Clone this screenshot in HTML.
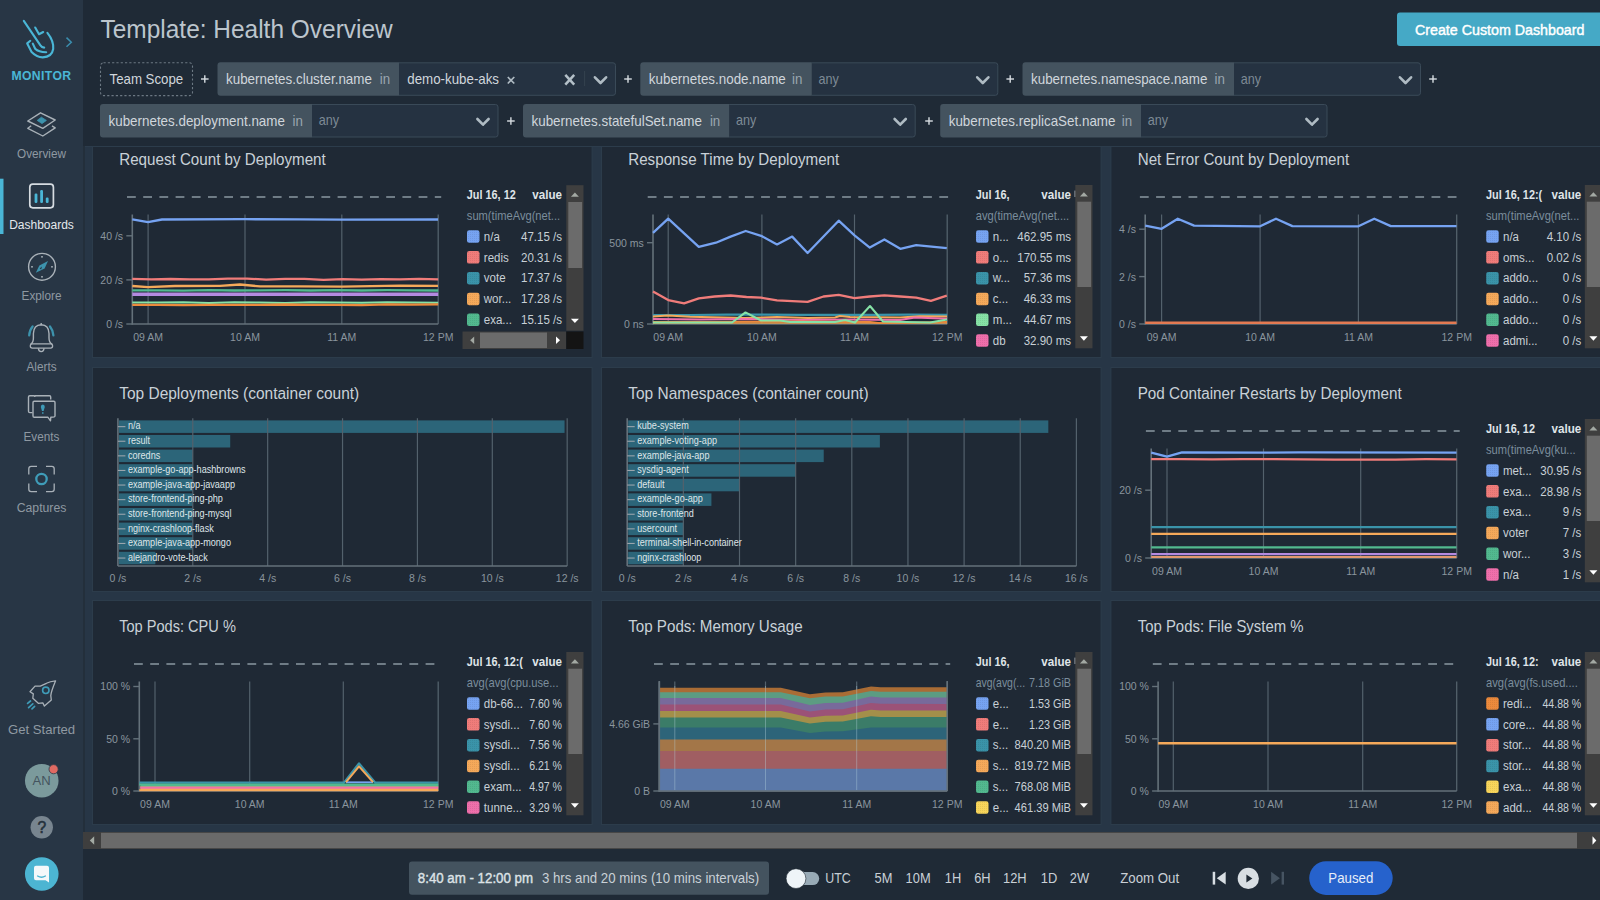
<!DOCTYPE html>
<html><head><meta charset="utf-8"><title>Health Overview</title>
<style>
html,body{margin:0;padding:0;width:1600px;height:900px;overflow:hidden;background:#1f2a36;}
svg{display:block;font-family:"Liberation Sans", sans-serif;}
</style></head><body>
<svg width="1600" height="900" viewBox="0 0 1600 900">
<defs>
<pattern id="dots" width="2" height="2" patternUnits="userSpaceOnUse"><rect width="1" height="1" fill="rgba(0,0,0,0.07)"/></pattern>
</defs>
<rect x="0" y="0" width="1600" height="900" fill="#1f2a36"/>
<rect x="83" y="146" width="1517" height="703" fill="#273646"/>
<line x1="83" y1="146.5" x2="1600" y2="146.5" stroke="#2c3c4c" stroke-width="1"/>
<rect x="92.5" y="146.5" width="499.5" height="211" fill="none" stroke="#2c3c4b" stroke-width="1"/>
<rect x="93" y="147" width="498.5" height="210" fill="#1f2935"/>
<rect x="92.5" y="367.5" width="499.5" height="224" fill="none" stroke="#2c3c4b" stroke-width="1"/>
<rect x="93" y="368" width="498.5" height="223" fill="#1f2935"/>
<rect x="92.5" y="600.5" width="499.5" height="224" fill="none" stroke="#2c3c4b" stroke-width="1"/>
<rect x="93" y="601" width="498.5" height="223" fill="#1f2935"/>
<rect x="601.5" y="146.5" width="499.5" height="211" fill="none" stroke="#2c3c4b" stroke-width="1"/>
<rect x="602" y="147" width="498.5" height="210" fill="#1f2935"/>
<rect x="601.5" y="367.5" width="499.5" height="224" fill="none" stroke="#2c3c4b" stroke-width="1"/>
<rect x="602" y="368" width="498.5" height="223" fill="#1f2935"/>
<rect x="601.5" y="600.5" width="499.5" height="224" fill="none" stroke="#2c3c4b" stroke-width="1"/>
<rect x="602" y="601" width="498.5" height="223" fill="#1f2935"/>
<rect x="1111.0" y="146.5" width="489.5" height="211" fill="none" stroke="#2c3c4b" stroke-width="1"/>
<rect x="1111.5" y="147" width="488.5" height="210" fill="#1f2935"/>
<rect x="1111.0" y="367.5" width="489.5" height="224" fill="none" stroke="#2c3c4b" stroke-width="1"/>
<rect x="1111.5" y="368" width="488.5" height="223" fill="#1f2935"/>
<rect x="1111.0" y="600.5" width="489.5" height="224" fill="none" stroke="#2c3c4b" stroke-width="1"/>
<rect x="1111.5" y="601" width="488.5" height="223" fill="#1f2935"/>
<text transform="translate(119.20 164.80) scale(0.949 1)" font-size="16" fill="#c9d1d8" text-anchor="start">Request Count by Deployment</text>
<line x1="148.1" y1="214.5" x2="148.1" y2="324" stroke="#53616c" stroke-width="1.2"/>
<line x1="245" y1="214.5" x2="245" y2="324" stroke="#53616c" stroke-width="1.2"/>
<line x1="341.8" y1="214.5" x2="341.8" y2="324" stroke="#53616c" stroke-width="1.2"/>
<line x1="132.3" y1="214.5" x2="132.3" y2="324.8" stroke="#64717a" stroke-width="1.6"/>
<line x1="438.2" y1="214.5" x2="438.2" y2="324" stroke="#53616c" stroke-width="1.3"/>
<line x1="132.3" y1="324" x2="438.2" y2="324" stroke="#64717a" stroke-width="1.6"/>
<line x1="126.30000000000001" y1="235.8" x2="132.3" y2="235.8" stroke="#64717a" stroke-width="1.4"/>
<text transform="translate(123.10 239.70) scale(0.955 1)" font-size="11" fill="#8a959e" text-anchor="end">40 /s</text>
<line x1="126.30000000000001" y1="279.9" x2="132.3" y2="279.9" stroke="#64717a" stroke-width="1.4"/>
<text transform="translate(123.10 283.80) scale(0.955 1)" font-size="11" fill="#8a959e" text-anchor="end">20 /s</text>
<line x1="126.30000000000001" y1="324" x2="132.3" y2="324" stroke="#64717a" stroke-width="1.4"/>
<text transform="translate(123.10 327.90) scale(0.955 1)" font-size="11" fill="#8a959e" text-anchor="end">0 /s</text>
<text transform="translate(148.10 340.80) scale(0.955 1)" font-size="11" fill="#8a959e" text-anchor="middle">09 AM</text>
<text transform="translate(245.00 340.80) scale(0.955 1)" font-size="11" fill="#8a959e" text-anchor="middle">10 AM</text>
<text transform="translate(341.80 340.80) scale(0.955 1)" font-size="11" fill="#8a959e" text-anchor="middle">11 AM</text>
<text transform="translate(438.20 340.80) scale(0.955 1)" font-size="11" fill="#8a959e" text-anchor="middle">12 PM</text>
<line x1="127.00000000000001" y1="197.0" x2="441.2" y2="197.0" stroke="#6f7c86" stroke-width="2" stroke-dasharray="8.8 7.4"/>
<polyline points="132.3,219.3 148.0,222.2 162.0,219.5 245.0,219.2 300.0,219.4 342.0,219.6 438.0,219.5" fill="none" stroke="#76a3f2" stroke-width="2.3" stroke-linejoin="round"/>
<polyline points="132.3,278.9 151.4,279.3 170.5,279.0 189.7,279.3 208.8,279.4 227.9,278.7 247.0,278.6 266.1,279.6 285.2,278.9 304.4,278.9 323.5,279.8 342.6,279.2 361.7,279.6 380.8,279.2 400.0,279.4 419.1,278.8 438.2,279.4" fill="none" stroke="#f07c7a" stroke-width="2.3" stroke-linejoin="round"/>
<polyline points="132.3,286.0 148.0,287.2 175.0,286.0 220.0,285.8 240.0,284.5 260.0,286.4 300.0,286.4 342.0,286.6 400.0,285.6 438.0,285.8" fill="none" stroke="#f5a95a" stroke-width="2.3" stroke-linejoin="round"/>
<polyline points="132.3,290.4 157.8,290.3 183.3,290.6 208.8,290.2 234.3,290.5 259.8,290.4 285.2,290.2 310.7,290.5 336.2,290.2 361.7,290.5 387.2,290.2 412.7,290.3 438.2,290.5" fill="none" stroke="#52b98f" stroke-width="2.3" stroke-linejoin="round"/>
<polyline points="132.3,294.2 208.8,294.2 285.2,294.2 361.7,294.2 438.2,294.2" fill="none" stroke="#b48ae0" stroke-width="3.4" stroke-linejoin="round"/>
<polyline points="132.3,302.6 157.8,302.5 183.3,302.3 208.8,302.9 234.3,302.2 259.8,302.6 285.2,302.9 310.7,302.3 336.2,302.6 361.7,302.7 387.2,302.2 412.7,302.5 438.2,302.8" fill="none" stroke="#86e2a6" stroke-width="2.0" stroke-linejoin="round"/>
<polyline points="132.3,304.8 157.8,304.9 183.3,305.2 208.8,304.8 234.3,304.8 259.8,304.9 285.2,304.5 310.7,304.8 336.2,304.9 361.7,305.1 387.2,304.4 412.7,304.6 438.2,304.4" fill="none" stroke="#ec8a3c" stroke-width="2.3" stroke-linejoin="round"/>
<text transform="translate(466.80 199.20) scale(0.907 1)" font-size="12" fill="#dfe4e8" font-weight="bold" text-anchor="start">Jul 16, 12</text>
<text transform="translate(562.00 199.20) scale(0.968 1)" font-size="12" fill="#dfe4e8" font-weight="bold" text-anchor="end">value</text>
<text transform="translate(466.80 220.00) scale(0.93 1)" font-size="12" fill="#7b8d9c" text-anchor="start">sum(timeAvg(net...</text>
<rect x="467.0" y="230.3" width="12.5" height="12.5" fill="#76a3f2" rx="2.2"/>
<rect x="467.0" y="230.3" width="12.5" height="12.5" fill="url(#dots)" rx="2.2"/>
<text transform="translate(483.80 240.70) scale(0.96 1)" font-size="12" fill="#c8d0d6" text-anchor="start">n/a</text>
<text transform="translate(562.00 240.70) scale(0.96 1)" font-size="12" fill="#c8d0d6" text-anchor="end">47.15 /s</text>
<rect x="467.0" y="251.10000000000002" width="12.5" height="12.5" fill="#f07c7a" rx="2.2"/>
<rect x="467.0" y="251.10000000000002" width="12.5" height="12.5" fill="url(#dots)" rx="2.2"/>
<text transform="translate(483.80 261.50) scale(0.96 1)" font-size="12" fill="#c8d0d6" text-anchor="start">redis</text>
<text transform="translate(562.00 261.50) scale(0.96 1)" font-size="12" fill="#c8d0d6" text-anchor="end">20.31 /s</text>
<rect x="467.0" y="271.90000000000003" width="12.5" height="12.5" fill="#3a93a9" rx="2.2"/>
<rect x="467.0" y="271.90000000000003" width="12.5" height="12.5" fill="url(#dots)" rx="2.2"/>
<text transform="translate(483.80 282.30) scale(0.96 1)" font-size="12" fill="#c8d0d6" text-anchor="start">vote</text>
<text transform="translate(562.00 282.30) scale(0.96 1)" font-size="12" fill="#c8d0d6" text-anchor="end">17.37 /s</text>
<rect x="467.0" y="292.70000000000005" width="12.5" height="12.5" fill="#f5a95a" rx="2.2"/>
<rect x="467.0" y="292.70000000000005" width="12.5" height="12.5" fill="url(#dots)" rx="2.2"/>
<text transform="translate(483.80 303.10) scale(0.96 1)" font-size="12" fill="#c8d0d6" text-anchor="start">wor...</text>
<text transform="translate(562.00 303.10) scale(0.96 1)" font-size="12" fill="#c8d0d6" text-anchor="end">17.28 /s</text>
<rect x="467.0" y="313.5" width="12.5" height="12.5" fill="#52b98f" rx="2.2"/>
<rect x="467.0" y="313.5" width="12.5" height="12.5" fill="url(#dots)" rx="2.2"/>
<text transform="translate(483.80 323.90) scale(0.96 1)" font-size="12" fill="#c8d0d6" text-anchor="start">exa...</text>
<text transform="translate(562.00 323.90) scale(0.96 1)" font-size="12" fill="#c8d0d6" text-anchor="end">15.15 /s</text>
<rect x="566.3" y="185.2" width="17.2" height="145.5" fill="#3f3f3f"/>
<rect x="568.3" y="202" width="13.8" height="66" fill="#6b6b6b"/>
<path d="M570.9,196.7 L574.9,192.39999999999998 L578.9,196.7 Z" fill="#a3a9a3"/>
<path d="M570.9,318.7 L574.9,323.09999999999997 L578.9,318.7 Z" fill="#ffffff"/>
<rect x="462.5" y="331.5" width="103.5" height="17.5" fill="#3f3f3f"/>
<rect x="480" y="332.5" width="67" height="15.5" fill="#6b6b6b"/>
<path d="M470.2,340.2 L474.2,336.4 L474.2,344 Z" fill="#a3a9a3"/>
<path d="M556,336.4 L560,340.2 L556,344 Z" fill="#ffffff"/>
<rect x="566.3" y="331.5" width="17.2" height="17.5" fill="#141414"/>
<text transform="translate(628.20 164.80) scale(0.95 1)" font-size="16" fill="#c9d1d8" text-anchor="start">Response Time by Deployment</text>
<line x1="668.2" y1="214.5" x2="668.2" y2="324" stroke="#53616c" stroke-width="1.2"/>
<line x1="761.9" y1="214.5" x2="761.9" y2="324" stroke="#53616c" stroke-width="1.2"/>
<line x1="854.5" y1="214.5" x2="854.5" y2="324" stroke="#53616c" stroke-width="1.2"/>
<line x1="653" y1="214.5" x2="653" y2="324.8" stroke="#64717a" stroke-width="1.6"/>
<line x1="947.2" y1="214.5" x2="947.2" y2="324" stroke="#53616c" stroke-width="1.3"/>
<line x1="653" y1="324" x2="947.2" y2="324" stroke="#64717a" stroke-width="1.6"/>
<line x1="647" y1="242.7" x2="653" y2="242.7" stroke="#64717a" stroke-width="1.4"/>
<text transform="translate(643.80 246.60) scale(0.955 1)" font-size="11" fill="#8a959e" text-anchor="end">500 ms</text>
<line x1="647" y1="324" x2="653" y2="324" stroke="#64717a" stroke-width="1.4"/>
<text transform="translate(643.80 327.90) scale(0.955 1)" font-size="11" fill="#8a959e" text-anchor="end">0 ns</text>
<text transform="translate(668.20 340.80) scale(0.955 1)" font-size="11" fill="#8a959e" text-anchor="middle">09 AM</text>
<text transform="translate(761.90 340.80) scale(0.955 1)" font-size="11" fill="#8a959e" text-anchor="middle">10 AM</text>
<text transform="translate(854.50 340.80) scale(0.955 1)" font-size="11" fill="#8a959e" text-anchor="middle">11 AM</text>
<text transform="translate(947.20 340.80) scale(0.955 1)" font-size="11" fill="#8a959e" text-anchor="middle">12 PM</text>
<line x1="647.7" y1="197.0" x2="950.2" y2="197.0" stroke="#6f7c86" stroke-width="2" stroke-dasharray="8.8 7.4"/>
<polyline points="653.0,232.9 668.2,218.7 698.8,246.8 715.9,242.7 730.6,236.6 745.7,231.0 761.1,235.8 777.0,244.4 792.2,236.6 807.6,253.0 838.7,220.7 854.5,235.4 869.8,247.6 884.4,239.5 900.3,248.8 916.2,245.1 946.8,248.1" fill="none" stroke="#76a3f2" stroke-width="2.3" stroke-linejoin="round"/>
<polyline points="653.0,291.6 668.2,300.1 684.1,303.3 698.8,298.4 714.7,296.5 730.6,295.5 746.5,297.0 761.1,297.7 777.0,300.4 807.6,301.9 823.5,296.5 838.7,294.8 854.5,298.2 869.8,296.5 884.4,295.3 900.3,296.5 916.2,297.7 930.9,300.9 946.8,295.7" fill="none" stroke="#f07c7a" stroke-width="2.3" stroke-linejoin="round"/>
<polyline points="653.0,315.0 689.8,315.0 726.5,314.6 763.3,314.6 800.1,314.9 836.9,314.9 873.7,314.9 910.4,314.7 947.2,314.8" fill="none" stroke="#3a93a9" stroke-width="2.2" stroke-linejoin="round"/>
<polyline points="653.0,316.5 668.0,315.4 690.0,316.8 745.0,318.0 777.0,317.0 808.0,318.0 835.0,317.5 840.0,316.0 850.0,317.0 900.0,317.6 920.0,316.2 947.0,316.5" fill="none" stroke="#f5a95a" stroke-width="2.0" stroke-linejoin="round"/>
<polyline points="653.0,319.0 700.0,319.5 745.0,319.0 800.0,320.0 850.0,319.5 900.0,320.0 915.0,317.5 947.0,318.8" fill="none" stroke="#ef6fab" stroke-width="2.0" stroke-linejoin="round"/>
<polyline points="653.0,323.0 947.0,323.0" fill="none" stroke="#e8a050" stroke-width="1.6" stroke-linejoin="round"/>
<polyline points="653.0,321.8 700.0,322.0 800.0,321.5 870.0,322.0 880.0,323.2 947.0,321.8" fill="none" stroke="#ec8a3c" stroke-width="1.8" stroke-linejoin="round"/>
<polyline points="653.0,322.5 732.0,322.5 745.5,312.4 761.0,320.5 780.0,320.5 790.0,322.0 835.0,322.0 845.0,320.0 855.0,322.5 870.0,306.0 883.0,321.5 930.0,322.5 947.0,319.5" fill="none" stroke="#86e2a6" stroke-width="2.0" stroke-linejoin="round"/>
<rect x="1074.6" y="190.6" width="1.0" height="6.4" fill="#c8ced3"/>
<text transform="translate(975.80 199.20) scale(0.907 1)" font-size="12" fill="#dfe4e8" font-weight="bold" text-anchor="start">Jul 16,</text>
<text transform="translate(1071.00 199.20) scale(0.968 1)" font-size="12" fill="#dfe4e8" font-weight="bold" text-anchor="end">value</text>
<text transform="translate(975.80 220.00) scale(0.93 1)" font-size="12" fill="#7b8d9c" text-anchor="start">avg(timeAvg(net....</text>
<rect x="976.0" y="230.3" width="12.5" height="12.5" fill="#76a3f2" rx="2.2"/>
<rect x="976.0" y="230.3" width="12.5" height="12.5" fill="url(#dots)" rx="2.2"/>
<text transform="translate(992.80 240.70) scale(0.96 1)" font-size="12" fill="#c8d0d6" text-anchor="start">n...</text>
<text transform="translate(1071.00 240.70) scale(0.96 1)" font-size="12" fill="#c8d0d6" text-anchor="end">462.95 ms</text>
<rect x="976.0" y="251.10000000000002" width="12.5" height="12.5" fill="#f07c7a" rx="2.2"/>
<rect x="976.0" y="251.10000000000002" width="12.5" height="12.5" fill="url(#dots)" rx="2.2"/>
<text transform="translate(992.80 261.50) scale(0.96 1)" font-size="12" fill="#c8d0d6" text-anchor="start">o...</text>
<text transform="translate(1071.00 261.50) scale(0.96 1)" font-size="12" fill="#c8d0d6" text-anchor="end">170.55 ms</text>
<rect x="976.0" y="271.90000000000003" width="12.5" height="12.5" fill="#3a93a9" rx="2.2"/>
<rect x="976.0" y="271.90000000000003" width="12.5" height="12.5" fill="url(#dots)" rx="2.2"/>
<text transform="translate(992.80 282.30) scale(0.96 1)" font-size="12" fill="#c8d0d6" text-anchor="start">w...</text>
<text transform="translate(1071.00 282.30) scale(0.96 1)" font-size="12" fill="#c8d0d6" text-anchor="end">57.36 ms</text>
<rect x="976.0" y="292.70000000000005" width="12.5" height="12.5" fill="#f5a95a" rx="2.2"/>
<rect x="976.0" y="292.70000000000005" width="12.5" height="12.5" fill="url(#dots)" rx="2.2"/>
<text transform="translate(992.80 303.10) scale(0.96 1)" font-size="12" fill="#c8d0d6" text-anchor="start">c...</text>
<text transform="translate(1071.00 303.10) scale(0.96 1)" font-size="12" fill="#c8d0d6" text-anchor="end">46.33 ms</text>
<rect x="976.0" y="313.5" width="12.5" height="12.5" fill="#86e2a6" rx="2.2"/>
<rect x="976.0" y="313.5" width="12.5" height="12.5" fill="url(#dots)" rx="2.2"/>
<text transform="translate(992.80 323.90) scale(0.96 1)" font-size="12" fill="#c8d0d6" text-anchor="start">m...</text>
<text transform="translate(1071.00 323.90) scale(0.96 1)" font-size="12" fill="#c8d0d6" text-anchor="end">44.67 ms</text>
<rect x="976.0" y="334.3" width="12.5" height="12.5" fill="#ef6fab" rx="2.2"/>
<rect x="976.0" y="334.3" width="12.5" height="12.5" fill="url(#dots)" rx="2.2"/>
<text transform="translate(992.80 344.70) scale(0.96 1)" font-size="12" fill="#c8d0d6" text-anchor="start">db</text>
<text transform="translate(1071.00 344.70) scale(0.96 1)" font-size="12" fill="#c8d0d6" text-anchor="end">32.90 ms</text>
<rect x="1075.3" y="185" width="17.2" height="163.3" fill="#3f3f3f"/>
<rect x="1077.3" y="201.7" width="13.8" height="85.30000000000001" fill="#6b6b6b"/>
<path d="M1079.8999999999999,196.5 L1083.8999999999999,192.2 L1087.8999999999999,196.5 Z" fill="#a3a9a3"/>
<path d="M1079.8999999999999,336.3 L1083.8999999999999,340.7 L1087.8999999999999,336.3 Z" fill="#ffffff"/>
<text transform="translate(1137.70 164.80) scale(0.948 1)" font-size="16" fill="#c9d1d8" text-anchor="start">Net Error Count by Deployment</text>
<line x1="1161.6" y1="214.5" x2="1161.6" y2="324" stroke="#53616c" stroke-width="1.2"/>
<line x1="1260.1" y1="214.5" x2="1260.1" y2="324" stroke="#53616c" stroke-width="1.2"/>
<line x1="1358.4" y1="214.5" x2="1358.4" y2="324" stroke="#53616c" stroke-width="1.2"/>
<line x1="1145.2" y1="214.5" x2="1145.2" y2="324.8" stroke="#64717a" stroke-width="1.6"/>
<line x1="1456.7" y1="214.5" x2="1456.7" y2="324" stroke="#53616c" stroke-width="1.3"/>
<line x1="1145.2" y1="324" x2="1456.7" y2="324" stroke="#64717a" stroke-width="1.6"/>
<line x1="1139.2" y1="229.2" x2="1145.2" y2="229.2" stroke="#64717a" stroke-width="1.4"/>
<text transform="translate(1136.00 233.10) scale(0.955 1)" font-size="11" fill="#8a959e" text-anchor="end">4 /s</text>
<line x1="1139.2" y1="276.6" x2="1145.2" y2="276.6" stroke="#64717a" stroke-width="1.4"/>
<text transform="translate(1136.00 280.50) scale(0.955 1)" font-size="11" fill="#8a959e" text-anchor="end">2 /s</text>
<line x1="1139.2" y1="324" x2="1145.2" y2="324" stroke="#64717a" stroke-width="1.4"/>
<text transform="translate(1136.00 327.90) scale(0.955 1)" font-size="11" fill="#8a959e" text-anchor="end">0 /s</text>
<text transform="translate(1161.60 340.80) scale(0.955 1)" font-size="11" fill="#8a959e" text-anchor="middle">09 AM</text>
<text transform="translate(1260.10 340.80) scale(0.955 1)" font-size="11" fill="#8a959e" text-anchor="middle">10 AM</text>
<text transform="translate(1358.40 340.80) scale(0.955 1)" font-size="11" fill="#8a959e" text-anchor="middle">11 AM</text>
<text transform="translate(1456.70 340.80) scale(0.955 1)" font-size="11" fill="#8a959e" text-anchor="middle">12 PM</text>
<line x1="1139.9" y1="197.0" x2="1459.7" y2="197.0" stroke="#6f7c86" stroke-width="2" stroke-dasharray="8.8 7.4"/>
<polyline points="1145.2,225.6 1161.6,228.8 1177.8,218.7 1194.1,225.6 1260.1,226.3 1276.0,218.7 1292.4,226.1 1358.4,226.3 1374.3,218.7 1390.8,226.1 1456.5,226.1" fill="none" stroke="#76a3f2" stroke-width="2.3" stroke-linejoin="round"/>
<polyline points="1145.2,322.8 1456.5,322.8" fill="none" stroke="#e47a52" stroke-width="2.4" stroke-linejoin="round"/>
<text transform="translate(1486.00 199.20) scale(0.907 1)" font-size="12" fill="#dfe4e8" font-weight="bold" text-anchor="start">Jul 16, 12:(</text>
<text transform="translate(1581.20 199.20) scale(0.968 1)" font-size="12" fill="#dfe4e8" font-weight="bold" text-anchor="end">value</text>
<text transform="translate(1486.00 220.00) scale(0.93 1)" font-size="12" fill="#7b8d9c" text-anchor="start">sum(timeAvg(net...</text>
<rect x="1486.2" y="230.3" width="12.5" height="12.5" fill="#76a3f2" rx="2.2"/>
<rect x="1486.2" y="230.3" width="12.5" height="12.5" fill="url(#dots)" rx="2.2"/>
<text transform="translate(1503.00 240.70) scale(0.96 1)" font-size="12" fill="#c8d0d6" text-anchor="start">n/a</text>
<text transform="translate(1581.20 240.70) scale(0.96 1)" font-size="12" fill="#c8d0d6" text-anchor="end">4.10 /s</text>
<rect x="1486.2" y="251.10000000000002" width="12.5" height="12.5" fill="#f07c7a" rx="2.2"/>
<rect x="1486.2" y="251.10000000000002" width="12.5" height="12.5" fill="url(#dots)" rx="2.2"/>
<text transform="translate(1503.00 261.50) scale(0.96 1)" font-size="12" fill="#c8d0d6" text-anchor="start">oms...</text>
<text transform="translate(1581.20 261.50) scale(0.96 1)" font-size="12" fill="#c8d0d6" text-anchor="end">0.02 /s</text>
<rect x="1486.2" y="271.90000000000003" width="12.5" height="12.5" fill="#3a93a9" rx="2.2"/>
<rect x="1486.2" y="271.90000000000003" width="12.5" height="12.5" fill="url(#dots)" rx="2.2"/>
<text transform="translate(1503.00 282.30) scale(0.96 1)" font-size="12" fill="#c8d0d6" text-anchor="start">addo...</text>
<text transform="translate(1581.20 282.30) scale(0.96 1)" font-size="12" fill="#c8d0d6" text-anchor="end">0 /s</text>
<rect x="1486.2" y="292.70000000000005" width="12.5" height="12.5" fill="#f5a95a" rx="2.2"/>
<rect x="1486.2" y="292.70000000000005" width="12.5" height="12.5" fill="url(#dots)" rx="2.2"/>
<text transform="translate(1503.00 303.10) scale(0.96 1)" font-size="12" fill="#c8d0d6" text-anchor="start">addo...</text>
<text transform="translate(1581.20 303.10) scale(0.96 1)" font-size="12" fill="#c8d0d6" text-anchor="end">0 /s</text>
<rect x="1486.2" y="313.5" width="12.5" height="12.5" fill="#52b98f" rx="2.2"/>
<rect x="1486.2" y="313.5" width="12.5" height="12.5" fill="url(#dots)" rx="2.2"/>
<text transform="translate(1503.00 323.90) scale(0.96 1)" font-size="12" fill="#c8d0d6" text-anchor="start">addo...</text>
<text transform="translate(1581.20 323.90) scale(0.96 1)" font-size="12" fill="#c8d0d6" text-anchor="end">0 /s</text>
<rect x="1486.2" y="334.3" width="12.5" height="12.5" fill="#ef6fab" rx="2.2"/>
<rect x="1486.2" y="334.3" width="12.5" height="12.5" fill="url(#dots)" rx="2.2"/>
<text transform="translate(1503.00 344.70) scale(0.96 1)" font-size="12" fill="#c8d0d6" text-anchor="start">admi...</text>
<text transform="translate(1581.20 344.70) scale(0.96 1)" font-size="12" fill="#c8d0d6" text-anchor="end">0 /s</text>
<rect x="1584.8" y="185" width="17.2" height="163.3" fill="#3f3f3f"/>
<rect x="1586.8" y="201.7" width="13.8" height="85.30000000000001" fill="#6b6b6b"/>
<path d="M1589.3999999999999,196.5 L1593.3999999999999,192.2 L1597.3999999999999,196.5 Z" fill="#a3a9a3"/>
<path d="M1589.3999999999999,336.3 L1593.3999999999999,340.7 L1597.3999999999999,336.3 Z" fill="#ffffff"/>
<text transform="translate(119.20 398.80) scale(0.968 1)" font-size="16" fill="#c9d1d8" text-anchor="start">Top Deployments (container count)</text>
<rect x="118.9" y="420.4" width="445.65919999999994" height="12.5" fill="#2c6579"/>
<rect x="118.9" y="435.0" width="111.32" height="12.5" fill="#2c6579"/>
<rect x="118.9" y="449.59999999999997" width="73.88" height="12.5" fill="#2c6579"/>
<rect x="118.9" y="464.2" width="73.88" height="12.5" fill="#2c6579"/>
<rect x="118.9" y="478.79999999999995" width="73.88" height="12.5" fill="#2c6579"/>
<rect x="118.9" y="493.4" width="73.88" height="12.5" fill="#2c6579"/>
<rect x="118.9" y="508.0" width="73.88" height="12.5" fill="#2c6579"/>
<rect x="118.9" y="522.6" width="73.88" height="12.5" fill="#2c6579"/>
<rect x="118.9" y="537.1999999999999" width="73.88" height="12.5" fill="#2c6579"/>
<rect x="118.9" y="551.8" width="36.44" height="12.5" fill="#2c6579"/>
<line x1="192.78" y1="418.2" x2="192.78" y2="566" stroke="#53616c" stroke-width="1.2"/>
<line x1="267.65999999999997" y1="418.2" x2="267.65999999999997" y2="566" stroke="#53616c" stroke-width="1.2"/>
<line x1="342.53999999999996" y1="418.2" x2="342.53999999999996" y2="566" stroke="#53616c" stroke-width="1.2"/>
<line x1="417.41999999999996" y1="418.2" x2="417.41999999999996" y2="566" stroke="#53616c" stroke-width="1.2"/>
<line x1="492.29999999999995" y1="418.2" x2="492.29999999999995" y2="566" stroke="#53616c" stroke-width="1.2"/>
<line x1="567.18" y1="418.2" x2="567.18" y2="566" stroke="#53616c" stroke-width="1.2"/>
<line x1="117.9" y1="418.2" x2="117.9" y2="566" stroke="#64717a" stroke-width="1.6"/>
<line x1="117.9" y1="566" x2="567.18" y2="566" stroke="#64717a" stroke-width="1.6"/>
<line x1="117.9" y1="426.65" x2="125.4" y2="426.65" stroke="#9aa5ad" stroke-width="1.1"/>
<text transform="translate(127.90 429.30) scale(0.91 1)" font-size="10" fill="#dfe5e9" text-anchor="start">n/a</text>
<line x1="117.9" y1="441.25" x2="125.4" y2="441.25" stroke="#9aa5ad" stroke-width="1.1"/>
<text transform="translate(127.90 443.90) scale(0.91 1)" font-size="10" fill="#dfe5e9" text-anchor="start">result</text>
<line x1="117.9" y1="455.84999999999997" x2="125.4" y2="455.84999999999997" stroke="#9aa5ad" stroke-width="1.1"/>
<text transform="translate(127.90 458.50) scale(0.91 1)" font-size="10" fill="#dfe5e9" text-anchor="start">coredns</text>
<line x1="117.9" y1="470.45" x2="125.4" y2="470.45" stroke="#9aa5ad" stroke-width="1.1"/>
<text transform="translate(127.90 473.10) scale(0.91 1)" font-size="10" fill="#dfe5e9" text-anchor="start">example-go-app-hashbrowns</text>
<line x1="117.9" y1="485.04999999999995" x2="125.4" y2="485.04999999999995" stroke="#9aa5ad" stroke-width="1.1"/>
<text transform="translate(127.90 487.70) scale(0.91 1)" font-size="10" fill="#dfe5e9" text-anchor="start">example-java-app-javaapp</text>
<line x1="117.9" y1="499.65" x2="125.4" y2="499.65" stroke="#9aa5ad" stroke-width="1.1"/>
<text transform="translate(127.90 502.30) scale(0.91 1)" font-size="10" fill="#dfe5e9" text-anchor="start">store-frontend-ping-php</text>
<line x1="117.9" y1="514.25" x2="125.4" y2="514.25" stroke="#9aa5ad" stroke-width="1.1"/>
<text transform="translate(127.90 516.90) scale(0.91 1)" font-size="10" fill="#dfe5e9" text-anchor="start">store-frontend-ping-mysql</text>
<line x1="117.9" y1="528.85" x2="125.4" y2="528.85" stroke="#9aa5ad" stroke-width="1.1"/>
<text transform="translate(127.90 531.50) scale(0.91 1)" font-size="10" fill="#dfe5e9" text-anchor="start">nginx-crashloop-flask</text>
<line x1="117.9" y1="543.4499999999999" x2="125.4" y2="543.4499999999999" stroke="#9aa5ad" stroke-width="1.1"/>
<text transform="translate(127.90 546.10) scale(0.91 1)" font-size="10" fill="#dfe5e9" text-anchor="start">example-java-app-mongo</text>
<line x1="117.9" y1="558.05" x2="125.4" y2="558.05" stroke="#9aa5ad" stroke-width="1.1"/>
<text transform="translate(127.90 560.70) scale(0.91 1)" font-size="10" fill="#dfe5e9" text-anchor="start">alejandro-vote-back</text>
<text transform="translate(117.90 582.00) scale(0.955 1)" font-size="11" fill="#8a959e" text-anchor="middle">0 /s</text>
<text transform="translate(192.78 582.00) scale(0.955 1)" font-size="11" fill="#8a959e" text-anchor="middle">2 /s</text>
<text transform="translate(267.66 582.00) scale(0.955 1)" font-size="11" fill="#8a959e" text-anchor="middle">4 /s</text>
<text transform="translate(342.54 582.00) scale(0.955 1)" font-size="11" fill="#8a959e" text-anchor="middle">6 /s</text>
<text transform="translate(417.42 582.00) scale(0.955 1)" font-size="11" fill="#8a959e" text-anchor="middle">8 /s</text>
<text transform="translate(492.30 582.00) scale(0.955 1)" font-size="11" fill="#8a959e" text-anchor="middle">10 /s</text>
<text transform="translate(567.18 582.00) scale(0.955 1)" font-size="11" fill="#8a959e" text-anchor="middle">12 /s</text>
<text transform="translate(628.20 398.80) scale(0.969 1)" font-size="16" fill="#c9d1d8" text-anchor="start">Top Namespaces (container count)</text>
<rect x="628.2" y="420.4" width="420.125" height="12.5" fill="#2c6579"/>
<rect x="628.2" y="435.0" width="251.67499999999998" height="12.5" fill="#2c6579"/>
<rect x="628.2" y="449.59999999999997" width="195.525" height="12.5" fill="#2c6579"/>
<rect x="628.2" y="464.2" width="167.45" height="12.5" fill="#2c6579"/>
<rect x="628.2" y="478.79999999999995" width="111.3" height="12.5" fill="#2c6579"/>
<rect x="628.2" y="493.4" width="83.225" height="12.5" fill="#2c6579"/>
<rect x="628.2" y="508.0" width="55.15" height="12.5" fill="#2c6579"/>
<rect x="628.2" y="522.6" width="55.15" height="12.5" fill="#2c6579"/>
<rect x="628.2" y="537.1999999999999" width="55.15" height="12.5" fill="#2c6579"/>
<rect x="628.2" y="551.8" width="55.15" height="12.5" fill="#2c6579"/>
<line x1="683.35" y1="418.2" x2="683.35" y2="566" stroke="#53616c" stroke-width="1.2"/>
<line x1="739.5" y1="418.2" x2="739.5" y2="566" stroke="#53616c" stroke-width="1.2"/>
<line x1="795.6500000000001" y1="418.2" x2="795.6500000000001" y2="566" stroke="#53616c" stroke-width="1.2"/>
<line x1="851.8000000000001" y1="418.2" x2="851.8000000000001" y2="566" stroke="#53616c" stroke-width="1.2"/>
<line x1="907.95" y1="418.2" x2="907.95" y2="566" stroke="#53616c" stroke-width="1.2"/>
<line x1="964.1" y1="418.2" x2="964.1" y2="566" stroke="#53616c" stroke-width="1.2"/>
<line x1="1020.25" y1="418.2" x2="1020.25" y2="566" stroke="#53616c" stroke-width="1.2"/>
<line x1="1076.4" y1="418.2" x2="1076.4" y2="566" stroke="#53616c" stroke-width="1.2"/>
<line x1="627.2" y1="418.2" x2="627.2" y2="566" stroke="#64717a" stroke-width="1.6"/>
<line x1="627.2" y1="566" x2="1076.4" y2="566" stroke="#64717a" stroke-width="1.6"/>
<line x1="627.2" y1="426.65" x2="634.7" y2="426.65" stroke="#9aa5ad" stroke-width="1.1"/>
<text transform="translate(637.20 429.30) scale(0.91 1)" font-size="10" fill="#dfe5e9" text-anchor="start">kube-system</text>
<line x1="627.2" y1="441.25" x2="634.7" y2="441.25" stroke="#9aa5ad" stroke-width="1.1"/>
<text transform="translate(637.20 443.90) scale(0.91 1)" font-size="10" fill="#dfe5e9" text-anchor="start">example-voting-app</text>
<line x1="627.2" y1="455.84999999999997" x2="634.7" y2="455.84999999999997" stroke="#9aa5ad" stroke-width="1.1"/>
<text transform="translate(637.20 458.50) scale(0.91 1)" font-size="10" fill="#dfe5e9" text-anchor="start">example-java-app</text>
<line x1="627.2" y1="470.45" x2="634.7" y2="470.45" stroke="#9aa5ad" stroke-width="1.1"/>
<text transform="translate(637.20 473.10) scale(0.91 1)" font-size="10" fill="#dfe5e9" text-anchor="start">sysdig-agent</text>
<line x1="627.2" y1="485.04999999999995" x2="634.7" y2="485.04999999999995" stroke="#9aa5ad" stroke-width="1.1"/>
<text transform="translate(637.20 487.70) scale(0.91 1)" font-size="10" fill="#dfe5e9" text-anchor="start">default</text>
<line x1="627.2" y1="499.65" x2="634.7" y2="499.65" stroke="#9aa5ad" stroke-width="1.1"/>
<text transform="translate(637.20 502.30) scale(0.91 1)" font-size="10" fill="#dfe5e9" text-anchor="start">example-go-app</text>
<line x1="627.2" y1="514.25" x2="634.7" y2="514.25" stroke="#9aa5ad" stroke-width="1.1"/>
<text transform="translate(637.20 516.90) scale(0.91 1)" font-size="10" fill="#dfe5e9" text-anchor="start">store-frontend</text>
<line x1="627.2" y1="528.85" x2="634.7" y2="528.85" stroke="#9aa5ad" stroke-width="1.1"/>
<text transform="translate(637.20 531.50) scale(0.91 1)" font-size="10" fill="#dfe5e9" text-anchor="start">usercount</text>
<line x1="627.2" y1="543.4499999999999" x2="634.7" y2="543.4499999999999" stroke="#9aa5ad" stroke-width="1.1"/>
<text transform="translate(637.20 546.10) scale(0.91 1)" font-size="10" fill="#dfe5e9" text-anchor="start">terminal-shell-in-container</text>
<line x1="627.2" y1="558.05" x2="634.7" y2="558.05" stroke="#9aa5ad" stroke-width="1.1"/>
<text transform="translate(637.20 560.70) scale(0.91 1)" font-size="10" fill="#dfe5e9" text-anchor="start">nginx-crashloop</text>
<text transform="translate(627.20 582.00) scale(0.955 1)" font-size="11" fill="#8a959e" text-anchor="middle">0 /s</text>
<text transform="translate(683.35 582.00) scale(0.955 1)" font-size="11" fill="#8a959e" text-anchor="middle">2 /s</text>
<text transform="translate(739.50 582.00) scale(0.955 1)" font-size="11" fill="#8a959e" text-anchor="middle">4 /s</text>
<text transform="translate(795.65 582.00) scale(0.955 1)" font-size="11" fill="#8a959e" text-anchor="middle">6 /s</text>
<text transform="translate(851.80 582.00) scale(0.955 1)" font-size="11" fill="#8a959e" text-anchor="middle">8 /s</text>
<text transform="translate(907.95 582.00) scale(0.955 1)" font-size="11" fill="#8a959e" text-anchor="middle">10 /s</text>
<text transform="translate(964.10 582.00) scale(0.955 1)" font-size="11" fill="#8a959e" text-anchor="middle">12 /s</text>
<text transform="translate(1020.25 582.00) scale(0.955 1)" font-size="11" fill="#8a959e" text-anchor="middle">14 /s</text>
<text transform="translate(1076.40 582.00) scale(0.955 1)" font-size="11" fill="#8a959e" text-anchor="middle">16 /s</text>
<text transform="translate(1137.70 398.80) scale(0.952 1)" font-size="16" fill="#c9d1d8" text-anchor="start">Pod Container Restarts by Deployment</text>
<line x1="1167" y1="448.5" x2="1167" y2="558" stroke="#53616c" stroke-width="1.2"/>
<line x1="1263.5" y1="448.5" x2="1263.5" y2="558" stroke="#53616c" stroke-width="1.2"/>
<line x1="1360.7" y1="448.5" x2="1360.7" y2="558" stroke="#53616c" stroke-width="1.2"/>
<line x1="1151.2" y1="448.5" x2="1151.2" y2="558.8" stroke="#64717a" stroke-width="1.6"/>
<line x1="1456.7" y1="448.5" x2="1456.7" y2="558" stroke="#53616c" stroke-width="1.3"/>
<line x1="1151.2" y1="558" x2="1456.7" y2="558" stroke="#64717a" stroke-width="1.6"/>
<line x1="1145.2" y1="490.2" x2="1151.2" y2="490.2" stroke="#64717a" stroke-width="1.4"/>
<text transform="translate(1142.00 494.10) scale(0.955 1)" font-size="11" fill="#8a959e" text-anchor="end">20 /s</text>
<line x1="1145.2" y1="558" x2="1151.2" y2="558" stroke="#64717a" stroke-width="1.4"/>
<text transform="translate(1142.00 561.90) scale(0.955 1)" font-size="11" fill="#8a959e" text-anchor="end">0 /s</text>
<text transform="translate(1167.00 574.80) scale(0.955 1)" font-size="11" fill="#8a959e" text-anchor="middle">09 AM</text>
<text transform="translate(1263.50 574.80) scale(0.955 1)" font-size="11" fill="#8a959e" text-anchor="middle">10 AM</text>
<text transform="translate(1360.70 574.80) scale(0.955 1)" font-size="11" fill="#8a959e" text-anchor="middle">11 AM</text>
<text transform="translate(1456.70 574.80) scale(0.955 1)" font-size="11" fill="#8a959e" text-anchor="middle">12 PM</text>
<line x1="1145.9" y1="431.0" x2="1459.7" y2="431.0" stroke="#6f7c86" stroke-width="2" stroke-dasharray="8.8 7.4"/>
<polyline points="1151.2,452.6 1167.0,456.6 1182.0,452.4 1263.0,452.6 1300.0,452.4 1456.5,452.6" fill="none" stroke="#76a3f2" stroke-width="2.3" stroke-linejoin="round"/>
<polyline points="1151.2,459.2 1181.7,459.2 1212.3,459.3 1242.8,459.2 1273.3,459.1 1303.8,459.3 1334.4,459.7 1364.9,459.6 1395.4,459.6 1426.0,459.2 1456.5,459.4" fill="none" stroke="#f07c7a" stroke-width="2.3" stroke-linejoin="round"/>
<polyline points="1151.2,527.2 1303.8,527.2 1456.5,527.2" fill="none" stroke="#3a93a9" stroke-width="2.3" stroke-linejoin="round"/>
<polyline points="1151.2,533.8 1303.8,533.8 1456.5,533.8" fill="none" stroke="#f5a95a" stroke-width="2.3" stroke-linejoin="round"/>
<polyline points="1151.2,547.4 1303.8,547.4 1456.5,547.4" fill="none" stroke="#52b98f" stroke-width="2.3" stroke-linejoin="round"/>
<polyline points="1151.2,554.2 1303.8,554.2 1456.5,554.2" fill="none" stroke="#b48ae0" stroke-width="2.3" stroke-linejoin="round"/>
<polyline points="1151.2,557.0 1303.8,557.0 1456.5,557.0" fill="none" stroke="#e39a6e" stroke-width="1.8" stroke-linejoin="round"/>
<text transform="translate(1486.00 433.20) scale(0.907 1)" font-size="12" fill="#dfe4e8" font-weight="bold" text-anchor="start">Jul 16, 12</text>
<text transform="translate(1581.20 433.20) scale(0.968 1)" font-size="12" fill="#dfe4e8" font-weight="bold" text-anchor="end">value</text>
<text transform="translate(1486.00 454.00) scale(0.93 1)" font-size="12" fill="#7b8d9c" text-anchor="start">sum(timeAvg(ku...</text>
<rect x="1486.2" y="464.3" width="12.5" height="12.5" fill="#76a3f2" rx="2.2"/>
<rect x="1486.2" y="464.3" width="12.5" height="12.5" fill="url(#dots)" rx="2.2"/>
<text transform="translate(1503.00 474.70) scale(0.96 1)" font-size="12" fill="#c8d0d6" text-anchor="start">met...</text>
<text transform="translate(1581.20 474.70) scale(0.96 1)" font-size="12" fill="#c8d0d6" text-anchor="end">30.95 /s</text>
<rect x="1486.2" y="485.1" width="12.5" height="12.5" fill="#f07c7a" rx="2.2"/>
<rect x="1486.2" y="485.1" width="12.5" height="12.5" fill="url(#dots)" rx="2.2"/>
<text transform="translate(1503.00 495.50) scale(0.96 1)" font-size="12" fill="#c8d0d6" text-anchor="start">exa...</text>
<text transform="translate(1581.20 495.50) scale(0.96 1)" font-size="12" fill="#c8d0d6" text-anchor="end">28.98 /s</text>
<rect x="1486.2" y="505.90000000000003" width="12.5" height="12.5" fill="#3a93a9" rx="2.2"/>
<rect x="1486.2" y="505.90000000000003" width="12.5" height="12.5" fill="url(#dots)" rx="2.2"/>
<text transform="translate(1503.00 516.30) scale(0.96 1)" font-size="12" fill="#c8d0d6" text-anchor="start">exa...</text>
<text transform="translate(1581.20 516.30) scale(0.96 1)" font-size="12" fill="#c8d0d6" text-anchor="end">9 /s</text>
<rect x="1486.2" y="526.7" width="12.5" height="12.5" fill="#f5a95a" rx="2.2"/>
<rect x="1486.2" y="526.7" width="12.5" height="12.5" fill="url(#dots)" rx="2.2"/>
<text transform="translate(1503.00 537.10) scale(0.96 1)" font-size="12" fill="#c8d0d6" text-anchor="start">voter</text>
<text transform="translate(1581.20 537.10) scale(0.96 1)" font-size="12" fill="#c8d0d6" text-anchor="end">7 /s</text>
<rect x="1486.2" y="547.5" width="12.5" height="12.5" fill="#52b98f" rx="2.2"/>
<rect x="1486.2" y="547.5" width="12.5" height="12.5" fill="url(#dots)" rx="2.2"/>
<text transform="translate(1503.00 557.90) scale(0.96 1)" font-size="12" fill="#c8d0d6" text-anchor="start">wor...</text>
<text transform="translate(1581.20 557.90) scale(0.96 1)" font-size="12" fill="#c8d0d6" text-anchor="end">3 /s</text>
<rect x="1486.2" y="568.3" width="12.5" height="12.5" fill="#ef6fab" rx="2.2"/>
<rect x="1486.2" y="568.3" width="12.5" height="12.5" fill="url(#dots)" rx="2.2"/>
<text transform="translate(1503.00 578.70) scale(0.96 1)" font-size="12" fill="#c8d0d6" text-anchor="start">n/a</text>
<text transform="translate(1581.20 578.70) scale(0.96 1)" font-size="12" fill="#c8d0d6" text-anchor="end">1 /s</text>
<rect x="1584.8" y="419" width="17.2" height="163.29999999999995" fill="#3f3f3f"/>
<rect x="1586.8" y="435.7" width="13.8" height="85.30000000000001" fill="#6b6b6b"/>
<path d="M1589.3999999999999,430.5 L1593.3999999999999,426.2 L1597.3999999999999,430.5 Z" fill="#a3a9a3"/>
<path d="M1589.3999999999999,570.3 L1593.3999999999999,574.6999999999999 L1597.3999999999999,570.3 Z" fill="#ffffff"/>
<text transform="translate(119.20 631.80) scale(0.912 1)" font-size="16" fill="#c9d1d8" text-anchor="start">Top Pods: CPU %</text>
<line x1="155" y1="681.5" x2="155" y2="791" stroke="#53616c" stroke-width="1.2"/>
<line x1="249.7" y1="681.5" x2="249.7" y2="791" stroke="#53616c" stroke-width="1.2"/>
<line x1="343.3" y1="681.5" x2="343.3" y2="791" stroke="#53616c" stroke-width="1.2"/>
<line x1="139.3" y1="681.5" x2="139.3" y2="791.8" stroke="#64717a" stroke-width="1.6"/>
<line x1="438.2" y1="681.5" x2="438.2" y2="791" stroke="#53616c" stroke-width="1.3"/>
<line x1="139.3" y1="791" x2="438.2" y2="791" stroke="#64717a" stroke-width="1.6"/>
<line x1="133.3" y1="686.5" x2="139.3" y2="686.5" stroke="#64717a" stroke-width="1.4"/>
<text transform="translate(130.10 690.40) scale(0.955 1)" font-size="11" fill="#8a959e" text-anchor="end">100 %</text>
<line x1="133.3" y1="738.8" x2="139.3" y2="738.8" stroke="#64717a" stroke-width="1.4"/>
<text transform="translate(130.10 742.70) scale(0.955 1)" font-size="11" fill="#8a959e" text-anchor="end">50 %</text>
<line x1="133.3" y1="791" x2="139.3" y2="791" stroke="#64717a" stroke-width="1.4"/>
<text transform="translate(130.10 794.90) scale(0.955 1)" font-size="11" fill="#8a959e" text-anchor="end">0 %</text>
<text transform="translate(155.00 807.80) scale(0.955 1)" font-size="11" fill="#8a959e" text-anchor="middle">09 AM</text>
<text transform="translate(249.70 807.80) scale(0.955 1)" font-size="11" fill="#8a959e" text-anchor="middle">10 AM</text>
<text transform="translate(343.30 807.80) scale(0.955 1)" font-size="11" fill="#8a959e" text-anchor="middle">11 AM</text>
<text transform="translate(438.20 807.80) scale(0.955 1)" font-size="11" fill="#8a959e" text-anchor="middle">12 PM</text>
<line x1="134.0" y1="664.0" x2="441.2" y2="664.0" stroke="#6f7c86" stroke-width="2" stroke-dasharray="8.8 7.4"/>
<rect x="140.3" y="786" width="297.9" height="5" fill="#f5a95a"/>
<rect x="140.3" y="786.5" width="297.9" height="2.2" fill="#ef6fab"/>
<rect x="140.3" y="784.2" width="297.9" height="2.2" fill="#52b98f"/>
<polyline points="139.3,782.6 344.0,782.6 359.0,763.4 375.0,782.6 438.2,782.6" fill="none" stroke="#3a93a9" stroke-width="2.3" stroke-linejoin="round"/>
<polyline points="139.3,790.2 438.2,790.2" fill="none" stroke="#f5a95a" stroke-width="2.0" stroke-linejoin="round"/>
<rect x="346" y="781.4" width="27" height="1.8" fill="#76a3f2"/>
<polyline points="346.0,782.2 359.0,766.4 373.0,782.2" fill="none" stroke="#f5a95a" stroke-width="2.0" stroke-linejoin="round"/>
<polyline points="139.3,784.5 438.2,784.5" fill="none" stroke="#52b98f" stroke-width="1.8" stroke-linejoin="round"/>
<text transform="translate(466.80 666.20) scale(0.907 1)" font-size="12" fill="#dfe4e8" font-weight="bold" text-anchor="start">Jul 16, 12:(</text>
<text transform="translate(562.00 666.20) scale(0.968 1)" font-size="12" fill="#dfe4e8" font-weight="bold" text-anchor="end">value</text>
<text transform="translate(466.80 687.00) scale(0.93 1)" font-size="12" fill="#7b8d9c" text-anchor="start">avg(avg(cpu.use...</text>
<rect x="467.0" y="697.3" width="12.5" height="12.5" fill="#76a3f2" rx="2.2"/>
<rect x="467.0" y="697.3" width="12.5" height="12.5" fill="url(#dots)" rx="2.2"/>
<text transform="translate(483.80 707.70) scale(0.96 1)" font-size="12" fill="#c8d0d6" text-anchor="start">db-66...</text>
<text transform="translate(562.00 707.70) scale(0.88 1)" font-size="12" fill="#c8d0d6" text-anchor="end">7.60 %</text>
<rect x="467.0" y="718.0999999999999" width="12.5" height="12.5" fill="#f07c7a" rx="2.2"/>
<rect x="467.0" y="718.0999999999999" width="12.5" height="12.5" fill="url(#dots)" rx="2.2"/>
<text transform="translate(483.80 728.50) scale(0.96 1)" font-size="12" fill="#c8d0d6" text-anchor="start">sysdi...</text>
<text transform="translate(562.00 728.50) scale(0.88 1)" font-size="12" fill="#c8d0d6" text-anchor="end">7.60 %</text>
<rect x="467.0" y="738.9" width="12.5" height="12.5" fill="#3a93a9" rx="2.2"/>
<rect x="467.0" y="738.9" width="12.5" height="12.5" fill="url(#dots)" rx="2.2"/>
<text transform="translate(483.80 749.30) scale(0.96 1)" font-size="12" fill="#c8d0d6" text-anchor="start">sysdi...</text>
<text transform="translate(562.00 749.30) scale(0.88 1)" font-size="12" fill="#c8d0d6" text-anchor="end">7.56 %</text>
<rect x="467.0" y="759.6999999999999" width="12.5" height="12.5" fill="#f5a95a" rx="2.2"/>
<rect x="467.0" y="759.6999999999999" width="12.5" height="12.5" fill="url(#dots)" rx="2.2"/>
<text transform="translate(483.80 770.10) scale(0.96 1)" font-size="12" fill="#c8d0d6" text-anchor="start">sysdi...</text>
<text transform="translate(562.00 770.10) scale(0.88 1)" font-size="12" fill="#c8d0d6" text-anchor="end">6.21 %</text>
<rect x="467.0" y="780.5" width="12.5" height="12.5" fill="#52b98f" rx="2.2"/>
<rect x="467.0" y="780.5" width="12.5" height="12.5" fill="url(#dots)" rx="2.2"/>
<text transform="translate(483.80 790.90) scale(0.96 1)" font-size="12" fill="#c8d0d6" text-anchor="start">exam...</text>
<text transform="translate(562.00 790.90) scale(0.88 1)" font-size="12" fill="#c8d0d6" text-anchor="end">4.97 %</text>
<rect x="467.0" y="801.3" width="12.5" height="12.5" fill="#ef6fab" rx="2.2"/>
<rect x="467.0" y="801.3" width="12.5" height="12.5" fill="url(#dots)" rx="2.2"/>
<text transform="translate(483.80 811.70) scale(0.96 1)" font-size="12" fill="#c8d0d6" text-anchor="start">tunne...</text>
<text transform="translate(562.00 811.70) scale(0.88 1)" font-size="12" fill="#c8d0d6" text-anchor="end">3.29 %</text>
<rect x="566.3" y="652" width="17.2" height="163.29999999999995" fill="#3f3f3f"/>
<rect x="568.3" y="668.7" width="13.8" height="85.29999999999995" fill="#6b6b6b"/>
<path d="M570.9,663.5 L574.9,659.2 L578.9,663.5 Z" fill="#a3a9a3"/>
<path d="M570.9,803.3 L574.9,807.6999999999999 L578.9,803.3 Z" fill="#ffffff"/>
<text transform="translate(628.20 631.80) scale(0.949 1)" font-size="16" fill="#c9d1d8" text-anchor="start">Top Pods: Memory Usage</text>
<line x1="674.8" y1="681.5" x2="674.8" y2="791" stroke="#53616c" stroke-width="1.2"/>
<line x1="765.5" y1="681.5" x2="765.5" y2="791" stroke="#53616c" stroke-width="1.2"/>
<line x1="856.7" y1="681.5" x2="856.7" y2="791" stroke="#53616c" stroke-width="1.2"/>
<line x1="659.3" y1="681.5" x2="659.3" y2="791.8" stroke="#64717a" stroke-width="1.6"/>
<line x1="947.2" y1="681.5" x2="947.2" y2="791" stroke="#53616c" stroke-width="1.3"/>
<line x1="659.3" y1="791" x2="947.2" y2="791" stroke="#64717a" stroke-width="1.6"/>
<line x1="653.3" y1="723.9" x2="659.3" y2="723.9" stroke="#64717a" stroke-width="1.4"/>
<text transform="translate(650.10 727.80) scale(0.955 1)" font-size="11" fill="#8a959e" text-anchor="end">4.66 GiB</text>
<line x1="653.3" y1="791" x2="659.3" y2="791" stroke="#64717a" stroke-width="1.4"/>
<text transform="translate(650.10 794.90) scale(0.955 1)" font-size="11" fill="#8a959e" text-anchor="end">0 B</text>
<text transform="translate(674.80 807.80) scale(0.955 1)" font-size="11" fill="#8a959e" text-anchor="middle">09 AM</text>
<text transform="translate(765.50 807.80) scale(0.955 1)" font-size="11" fill="#8a959e" text-anchor="middle">10 AM</text>
<text transform="translate(856.70 807.80) scale(0.955 1)" font-size="11" fill="#8a959e" text-anchor="middle">11 AM</text>
<text transform="translate(947.20 807.80) scale(0.955 1)" font-size="11" fill="#8a959e" text-anchor="middle">12 PM</text>
<line x1="654.0" y1="664.0" x2="950.2" y2="664.0" stroke="#6f7c86" stroke-width="2" stroke-dasharray="8.8 7.4"/>
<path d="M659.3,687.8 L780.8,687.8 L809.9,694.2 L825.4,692.4 L842.8,692.2 L871.0,686.4 L880.6,687.2 L947.2,687.3 L947.2,791 L659.3,791 Z" fill="#a96c35"/>
<path d="M659.3,692.3 L780.8,692.3 L809.9,698.3 L825.4,696.6 L842.8,696.4 L871.0,691.0 L880.6,691.7 L947.2,691.8 L947.2,791 L659.3,791 Z" fill="#5c9c82"/>
<path d="M659.3,698.1 L780.8,698.1 L809.9,704.9 L825.4,703.0 L842.8,702.7 L871.0,696.6 L880.6,697.4 L947.2,697.6 L947.2,791 L659.3,791 Z" fill="#786a9b"/>
<path d="M659.3,704.5 L780.8,704.5 L809.9,711.5 L825.4,709.5 L842.8,709.3 L871.0,703.0 L880.6,703.8 L947.2,703.9 L947.2,791 L659.3,791 Z" fill="#9b5277"/>
<path d="M659.3,711.1 L780.8,711.1 L809.9,717.5 L825.4,715.7 L842.8,715.5 L871.0,709.7 L880.6,710.5 L947.2,710.6 L947.2,791 L659.3,791 Z" fill="#a38f4a"/>
<path d="M659.3,717.5 L780.8,717.5 L809.9,723.5 L825.4,721.8 L842.8,721.6 L871.0,716.2 L880.6,716.9 L947.2,717.0 L947.2,791 L659.3,791 Z" fill="#3b7c68"/>
<path d="M659.3,727.6 L780.8,727.6 L809.9,733.0 L825.4,731.5 L842.8,731.3 L871.0,727.6 L880.6,727.6 L947.2,727.6 L947.2,791 L659.3,791 Z" fill="#2d6479"/>
<path d="M659.3,739.4 L780.8,739.4 L809.9,739.4 L825.4,739.4 L842.8,739.4 L871.0,739.4 L880.6,739.4 L947.2,739.4 L947.2,791 L659.3,791 Z" fill="#a37648"/>
<path d="M659.3,751.0 L780.8,751.0 L809.9,751.0 L825.4,751.0 L842.8,751.0 L871.0,751.0 L880.6,751.0 L947.2,751.0 L947.2,791 L659.3,791 Z" fill="#a05e62"/>
<path d="M659.3,768.8 L780.8,768.8 L809.9,768.8 L825.4,768.8 L842.8,768.8 L871.0,768.8 L880.6,768.8 L947.2,768.8 L947.2,791 L659.3,791 Z" fill="#5a78a8"/>
<line x1="674.8" y1="686" x2="674.8" y2="790" stroke="#b8d4e0" stroke-width="1.0" stroke-opacity="0.38"/>
<line x1="765.5" y1="686" x2="765.5" y2="790" stroke="#b8d4e0" stroke-width="1.0" stroke-opacity="0.38"/>
<line x1="856.7" y1="686" x2="856.7" y2="790" stroke="#b8d4e0" stroke-width="1.0" stroke-opacity="0.38"/>
<line x1="659.3" y1="681" x2="659.3" y2="791.8" stroke="#64717a" stroke-width="1.6"/>
<line x1="659.3" y1="791" x2="947.2" y2="791" stroke="#64717a" stroke-width="1.6"/>
<line x1="947.2" y1="681" x2="947.2" y2="791" stroke="#64717a" stroke-width="1.5"/>
<rect x="1074.6" y="657.6" width="1.0" height="6.4" fill="#c8ced3"/>
<text transform="translate(975.80 666.20) scale(0.907 1)" font-size="12" fill="#dfe4e8" font-weight="bold" text-anchor="start">Jul 16,</text>
<text transform="translate(1071.00 666.20) scale(0.968 1)" font-size="12" fill="#dfe4e8" font-weight="bold" text-anchor="end">value</text>
<text transform="translate(975.80 687.00) scale(0.87 1)" font-size="12" fill="#7b8d9c" text-anchor="start">avg(avg(...</text>
<text transform="translate(1071.00 687.00) scale(0.9 1)" font-size="12" fill="#7b8d9c" text-anchor="end">7.18 GiB</text>
<rect x="976.0" y="697.3" width="12.5" height="12.5" fill="#76a3f2" rx="2.2"/>
<rect x="976.0" y="697.3" width="12.5" height="12.5" fill="url(#dots)" rx="2.2"/>
<text transform="translate(992.80 707.70) scale(0.96 1)" font-size="12" fill="#c8d0d6" text-anchor="start">e...</text>
<text transform="translate(1071.00 707.70) scale(0.9 1)" font-size="12" fill="#c8d0d6" text-anchor="end">1.53 GiB</text>
<rect x="976.0" y="718.0999999999999" width="12.5" height="12.5" fill="#f07c7a" rx="2.2"/>
<rect x="976.0" y="718.0999999999999" width="12.5" height="12.5" fill="url(#dots)" rx="2.2"/>
<text transform="translate(992.80 728.50) scale(0.96 1)" font-size="12" fill="#c8d0d6" text-anchor="start">e...</text>
<text transform="translate(1071.00 728.50) scale(0.9 1)" font-size="12" fill="#c8d0d6" text-anchor="end">1.23 GiB</text>
<rect x="976.0" y="738.9" width="12.5" height="12.5" fill="#3a93a9" rx="2.2"/>
<rect x="976.0" y="738.9" width="12.5" height="12.5" fill="url(#dots)" rx="2.2"/>
<text transform="translate(992.80 749.30) scale(0.96 1)" font-size="12" fill="#c8d0d6" text-anchor="start">s...</text>
<text transform="translate(1071.00 749.30) scale(0.93 1)" font-size="12" fill="#c8d0d6" text-anchor="end">840.20 MiB</text>
<rect x="976.0" y="759.6999999999999" width="12.5" height="12.5" fill="#f5a95a" rx="2.2"/>
<rect x="976.0" y="759.6999999999999" width="12.5" height="12.5" fill="url(#dots)" rx="2.2"/>
<text transform="translate(992.80 770.10) scale(0.96 1)" font-size="12" fill="#c8d0d6" text-anchor="start">s...</text>
<text transform="translate(1071.00 770.10) scale(0.93 1)" font-size="12" fill="#c8d0d6" text-anchor="end">819.72 MiB</text>
<rect x="976.0" y="780.5" width="12.5" height="12.5" fill="#52b98f" rx="2.2"/>
<rect x="976.0" y="780.5" width="12.5" height="12.5" fill="url(#dots)" rx="2.2"/>
<text transform="translate(992.80 790.90) scale(0.96 1)" font-size="12" fill="#c8d0d6" text-anchor="start">s...</text>
<text transform="translate(1071.00 790.90) scale(0.93 1)" font-size="12" fill="#c8d0d6" text-anchor="end">768.08 MiB</text>
<rect x="976.0" y="801.3" width="12.5" height="12.5" fill="#f8d55a" rx="2.2"/>
<rect x="976.0" y="801.3" width="12.5" height="12.5" fill="url(#dots)" rx="2.2"/>
<text transform="translate(992.80 811.70) scale(0.96 1)" font-size="12" fill="#c8d0d6" text-anchor="start">e...</text>
<text transform="translate(1071.00 811.70) scale(0.93 1)" font-size="12" fill="#c8d0d6" text-anchor="end">461.39 MiB</text>
<rect x="1075.3" y="652" width="17.2" height="163.29999999999995" fill="#3f3f3f"/>
<rect x="1077.3" y="668.7" width="13.8" height="85.29999999999995" fill="#6b6b6b"/>
<path d="M1079.8999999999999,663.5 L1083.8999999999999,659.2 L1087.8999999999999,663.5 Z" fill="#a3a9a3"/>
<path d="M1079.8999999999999,803.3 L1083.8999999999999,807.6999999999999 L1087.8999999999999,803.3 Z" fill="#ffffff"/>
<text transform="translate(1137.70 631.80) scale(0.933 1)" font-size="16" fill="#c9d1d8" text-anchor="start">Top Pods: File System %</text>
<line x1="1173.3" y1="681.5" x2="1173.3" y2="791" stroke="#53616c" stroke-width="1.2"/>
<line x1="1268" y1="681.5" x2="1268" y2="791" stroke="#53616c" stroke-width="1.2"/>
<line x1="1362.7" y1="681.5" x2="1362.7" y2="791" stroke="#53616c" stroke-width="1.2"/>
<line x1="1158.1" y1="681.5" x2="1158.1" y2="791.8" stroke="#64717a" stroke-width="1.6"/>
<line x1="1456.7" y1="681.5" x2="1456.7" y2="791" stroke="#53616c" stroke-width="1.3"/>
<line x1="1158.1" y1="791" x2="1456.7" y2="791" stroke="#64717a" stroke-width="1.6"/>
<line x1="1152.1" y1="686.5" x2="1158.1" y2="686.5" stroke="#64717a" stroke-width="1.4"/>
<text transform="translate(1148.90 690.40) scale(0.955 1)" font-size="11" fill="#8a959e" text-anchor="end">100 %</text>
<line x1="1152.1" y1="738.8" x2="1158.1" y2="738.8" stroke="#64717a" stroke-width="1.4"/>
<text transform="translate(1148.90 742.70) scale(0.955 1)" font-size="11" fill="#8a959e" text-anchor="end">50 %</text>
<line x1="1152.1" y1="791" x2="1158.1" y2="791" stroke="#64717a" stroke-width="1.4"/>
<text transform="translate(1148.90 794.90) scale(0.955 1)" font-size="11" fill="#8a959e" text-anchor="end">0 %</text>
<text transform="translate(1173.30 807.80) scale(0.955 1)" font-size="11" fill="#8a959e" text-anchor="middle">09 AM</text>
<text transform="translate(1268.00 807.80) scale(0.955 1)" font-size="11" fill="#8a959e" text-anchor="middle">10 AM</text>
<text transform="translate(1362.70 807.80) scale(0.955 1)" font-size="11" fill="#8a959e" text-anchor="middle">11 AM</text>
<text transform="translate(1456.70 807.80) scale(0.955 1)" font-size="11" fill="#8a959e" text-anchor="middle">12 PM</text>
<line x1="1152.8" y1="664.0" x2="1459.7" y2="664.0" stroke="#6f7c86" stroke-width="2" stroke-dasharray="8.8 7.4"/>
<polyline points="1158.1,743.3 1456.5,743.3" fill="none" stroke="#f5a95a" stroke-width="2.6" stroke-linejoin="round"/>
<text transform="translate(1486.00 666.20) scale(0.907 1)" font-size="12" fill="#dfe4e8" font-weight="bold" text-anchor="start">Jul 16, 12:</text>
<text transform="translate(1581.20 666.20) scale(0.968 1)" font-size="12" fill="#dfe4e8" font-weight="bold" text-anchor="end">value</text>
<text transform="translate(1486.00 687.00) scale(0.93 1)" font-size="12" fill="#7b8d9c" text-anchor="start">avg(avg(fs.used....</text>
<rect x="1486.2" y="697.3" width="12.5" height="12.5" fill="#ec8a3c" rx="2.2"/>
<rect x="1486.2" y="697.3" width="12.5" height="12.5" fill="url(#dots)" rx="2.2"/>
<text transform="translate(1503.00 707.70) scale(0.96 1)" font-size="12" fill="#c8d0d6" text-anchor="start">redi...</text>
<text transform="translate(1581.20 707.70) scale(0.88 1)" font-size="12" fill="#c8d0d6" text-anchor="end">44.88 %</text>
<rect x="1486.2" y="718.0999999999999" width="12.5" height="12.5" fill="#76a3f2" rx="2.2"/>
<rect x="1486.2" y="718.0999999999999" width="12.5" height="12.5" fill="url(#dots)" rx="2.2"/>
<text transform="translate(1503.00 728.50) scale(0.96 1)" font-size="12" fill="#c8d0d6" text-anchor="start">core...</text>
<text transform="translate(1581.20 728.50) scale(0.88 1)" font-size="12" fill="#c8d0d6" text-anchor="end">44.88 %</text>
<rect x="1486.2" y="738.9" width="12.5" height="12.5" fill="#f07c7a" rx="2.2"/>
<rect x="1486.2" y="738.9" width="12.5" height="12.5" fill="url(#dots)" rx="2.2"/>
<text transform="translate(1503.00 749.30) scale(0.96 1)" font-size="12" fill="#c8d0d6" text-anchor="start">stor...</text>
<text transform="translate(1581.20 749.30) scale(0.88 1)" font-size="12" fill="#c8d0d6" text-anchor="end">44.88 %</text>
<rect x="1486.2" y="759.6999999999999" width="12.5" height="12.5" fill="#3a93a9" rx="2.2"/>
<rect x="1486.2" y="759.6999999999999" width="12.5" height="12.5" fill="url(#dots)" rx="2.2"/>
<text transform="translate(1503.00 770.10) scale(0.96 1)" font-size="12" fill="#c8d0d6" text-anchor="start">stor...</text>
<text transform="translate(1581.20 770.10) scale(0.88 1)" font-size="12" fill="#c8d0d6" text-anchor="end">44.88 %</text>
<rect x="1486.2" y="780.5" width="12.5" height="12.5" fill="#f8d55a" rx="2.2"/>
<rect x="1486.2" y="780.5" width="12.5" height="12.5" fill="url(#dots)" rx="2.2"/>
<text transform="translate(1503.00 790.90) scale(0.96 1)" font-size="12" fill="#c8d0d6" text-anchor="start">exa...</text>
<text transform="translate(1581.20 790.90) scale(0.88 1)" font-size="12" fill="#c8d0d6" text-anchor="end">44.88 %</text>
<rect x="1486.2" y="801.3" width="12.5" height="12.5" fill="#f5a95a" rx="2.2"/>
<rect x="1486.2" y="801.3" width="12.5" height="12.5" fill="url(#dots)" rx="2.2"/>
<text transform="translate(1503.00 811.70) scale(0.96 1)" font-size="12" fill="#c8d0d6" text-anchor="start">add...</text>
<text transform="translate(1581.20 811.70) scale(0.88 1)" font-size="12" fill="#c8d0d6" text-anchor="end">44.88 %</text>
<rect x="1584.8" y="652" width="17.2" height="163.29999999999995" fill="#3f3f3f"/>
<rect x="1586.8" y="668.7" width="13.8" height="85.29999999999995" fill="#6b6b6b"/>
<path d="M1589.3999999999999,663.5 L1593.3999999999999,659.2 L1597.3999999999999,663.5 Z" fill="#a3a9a3"/>
<path d="M1589.3999999999999,803.3 L1593.3999999999999,807.6999999999999 L1597.3999999999999,803.3 Z" fill="#ffffff"/>
<text transform="translate(100.50 37.60) scale(0.941 1)" font-size="26" fill="#bcc5cd" text-anchor="start">Template: Health Overview</text>
<rect x="1397" y="12.5" width="220" height="33.5" fill="#45a9c6" rx="3"/>
<text transform="translate(1415.00 35.20) scale(0.92 1)" font-size="15.5" fill="#ffffff" text-anchor="start" stroke="#ffffff" stroke-width="0.45">Create Custom Dashboard</text>
<rect x="100.5" y="62.8" width="92" height="32.8" fill="none" rx="3" stroke="#6c7883" stroke-width="1.1" stroke-dasharray="2.2 2.1"/>
<text transform="translate(109.50 84.20) scale(0.949 1)" font-size="14" fill="#d0d6dc" text-anchor="start">Team Scope</text>
<line x1="201.0" y1="79" x2="208.60000000000002" y2="79" stroke="#d8dee3" stroke-width="1.4"/>
<line x1="204.8" y1="75.2" x2="204.8" y2="82.8" stroke="#d8dee3" stroke-width="1.4"/>
<path d="M399.0,62.8 H613.0 Q615.5,62.8 615.5,65.3 V92.8 Q615.5,95.3 613.0,95.3 H399.0" stroke="#3a4a58" fill="#253241" stroke-width="1"/>
<path d="M220.5,62.3 H399.0 V95.8 H220.5 Q217.5,95.8 217.5,92.8 V65.3 Q217.5,62.3 220.5,62.3 Z" fill="#44535f"/>
<text transform="translate(226.00 84.10) scale(0.958 1)" font-size="14" fill="#d0d6dc" text-anchor="start">kubernetes.cluster.name</text>
<text transform="translate(379.70 84.10) scale(0.951 1)" font-size="14" fill="#9aa6af" text-anchor="start">in</text>
<path d="M594.9,77.3 L600.5,83.0 L606.1,77.3" stroke="#afbbc3" fill="none" stroke-width="2.6" stroke-linecap="round" stroke-linejoin="round"/>
<text transform="translate(407.30 84.10) scale(0.951 1)" font-size="14" fill="#d0d6dc" text-anchor="start">demo-kube-aks</text>
<line x1="507.8" y1="77" x2="514.3" y2="83.5" stroke="#afbbc3" stroke-width="1.7"/>
<line x1="514.3" y1="77" x2="507.8" y2="83.5" stroke="#afbbc3" stroke-width="1.7"/>
<line x1="565.3" y1="74.8" x2="574.2" y2="84.6" stroke="#b4c0c8" stroke-width="2.5"/>
<line x1="574.2" y1="74.8" x2="565.3" y2="84.6" stroke="#b4c0c8" stroke-width="2.5"/>
<line x1="584.6" y1="71" x2="584.6" y2="86" stroke="#34434f" stroke-width="1"/>
<line x1="624.2" y1="79" x2="631.8" y2="79" stroke="#d8dee3" stroke-width="1.4"/>
<line x1="628" y1="75.2" x2="628" y2="82.8" stroke="#d8dee3" stroke-width="1.4"/>
<path d="M811.8,62.8 H995.3 Q997.8,62.8 997.8,65.3 V92.8 Q997.8,95.3 995.3,95.3 H811.8" stroke="#3a4a58" fill="#253241" stroke-width="1"/>
<path d="M643.3,62.3 H811.8 V95.8 H643.3 Q640.3,95.8 640.3,92.8 V65.3 Q640.3,62.3 643.3,62.3 Z" fill="#44535f"/>
<text transform="translate(648.80 84.10) scale(0.958 1)" font-size="14" fill="#d0d6dc" text-anchor="start">kubernetes.node.name</text>
<text transform="translate(792.00 84.10) scale(0.951 1)" font-size="14" fill="#9aa6af" text-anchor="start">in</text>
<text transform="translate(818.60 83.60) scale(0.9 1)" font-size="14" fill="#7d8a95" text-anchor="start">any</text>
<path d="M977.1999999999999,77.3 L982.8,83.0 L988.4,77.3" stroke="#afbbc3" fill="none" stroke-width="2.6" stroke-linecap="round" stroke-linejoin="round"/>
<line x1="1006.4000000000001" y1="79" x2="1014.0" y2="79" stroke="#d8dee3" stroke-width="1.4"/>
<line x1="1010.2" y1="75.2" x2="1010.2" y2="82.8" stroke="#d8dee3" stroke-width="1.4"/>
<path d="M1234.0,62.8 H1418.0 Q1420.5,62.8 1420.5,65.3 V92.8 Q1420.5,95.3 1418.0,95.3 H1234.0" stroke="#3a4a58" fill="#253241" stroke-width="1"/>
<path d="M1025.5,62.3 H1234.0 V95.8 H1025.5 Q1022.5,95.8 1022.5,92.8 V65.3 Q1022.5,62.3 1025.5,62.3 Z" fill="#44535f"/>
<text transform="translate(1031.00 84.10) scale(0.958 1)" font-size="14" fill="#d0d6dc" text-anchor="start">kubernetes.namespace.name</text>
<text transform="translate(1214.50 84.10) scale(0.951 1)" font-size="14" fill="#9aa6af" text-anchor="start">in</text>
<text transform="translate(1240.80 83.60) scale(0.9 1)" font-size="14" fill="#7d8a95" text-anchor="start">any</text>
<path d="M1399.9,77.3 L1405.5,83.0 L1411.1,77.3" stroke="#afbbc3" fill="none" stroke-width="2.6" stroke-linecap="round" stroke-linejoin="round"/>
<line x1="1429.2" y1="79" x2="1436.8" y2="79" stroke="#d8dee3" stroke-width="1.4"/>
<line x1="1433" y1="75.2" x2="1433" y2="82.8" stroke="#d8dee3" stroke-width="1.4"/>
<path d="M312,104.5 H495.5 Q498.0,104.5 498.0,107 V134.5 Q498.0,137.0 495.5,137.0 H312" stroke="#3a4a58" fill="#253241" stroke-width="1"/>
<path d="M103,104 H312 V137.5 H103 Q100,137.5 100,134.5 V107 Q100,104 103,104 Z" fill="#44535f"/>
<text transform="translate(108.50 125.80) scale(0.958 1)" font-size="14" fill="#d0d6dc" text-anchor="start">kubernetes.deployment.name</text>
<text transform="translate(292.60 125.80) scale(0.951 1)" font-size="14" fill="#9aa6af" text-anchor="start">in</text>
<text transform="translate(318.80 125.30) scale(0.9 1)" font-size="14" fill="#7d8a95" text-anchor="start">any</text>
<path d="M477.4,119.0 L483.0,124.7 L488.6,119.0" stroke="#afbbc3" fill="none" stroke-width="2.6" stroke-linecap="round" stroke-linejoin="round"/>
<line x1="507.09999999999997" y1="121" x2="514.6999999999999" y2="121" stroke="#d8dee3" stroke-width="1.4"/>
<line x1="510.9" y1="117.2" x2="510.9" y2="124.8" stroke="#d8dee3" stroke-width="1.4"/>
<path d="M729.2,104.5 H912.7 Q915.2,104.5 915.2,107 V134.5 Q915.2,137.0 912.7,137.0 H729.2" stroke="#3a4a58" fill="#253241" stroke-width="1"/>
<path d="M526,104 H729.2 V137.5 H526 Q523,137.5 523,134.5 V107 Q523,104 526,104 Z" fill="#44535f"/>
<text transform="translate(531.50 125.80) scale(0.958 1)" font-size="14" fill="#d0d6dc" text-anchor="start">kubernetes.statefulSet.name</text>
<text transform="translate(709.90 125.80) scale(0.951 1)" font-size="14" fill="#9aa6af" text-anchor="start">in</text>
<text transform="translate(736.00 125.30) scale(0.9 1)" font-size="14" fill="#7d8a95" text-anchor="start">any</text>
<path d="M894.6,119.0 L900.2,124.7 L905.8000000000001,119.0" stroke="#afbbc3" fill="none" stroke-width="2.6" stroke-linecap="round" stroke-linejoin="round"/>
<line x1="925.2" y1="121" x2="932.8" y2="121" stroke="#d8dee3" stroke-width="1.4"/>
<line x1="929" y1="117.2" x2="929" y2="124.8" stroke="#d8dee3" stroke-width="1.4"/>
<path d="M1141.0,104.5 H1324.5 Q1327.0,104.5 1327.0,107 V134.5 Q1327.0,137.0 1324.5,137.0 H1141.0" stroke="#3a4a58" fill="#253241" stroke-width="1"/>
<path d="M943.2,104 H1141.0 V137.5 H943.2 Q940.2,137.5 940.2,134.5 V107 Q940.2,104 943.2,104 Z" fill="#44535f"/>
<text transform="translate(948.70 125.80) scale(0.958 1)" font-size="14" fill="#d0d6dc" text-anchor="start">kubernetes.replicaSet.name</text>
<text transform="translate(1121.70 125.80) scale(0.951 1)" font-size="14" fill="#9aa6af" text-anchor="start">in</text>
<text transform="translate(1147.80 125.30) scale(0.9 1)" font-size="14" fill="#7d8a95" text-anchor="start">any</text>
<path d="M1306.4,119.0 L1312.0,124.7 L1317.6,119.0" stroke="#afbbc3" fill="none" stroke-width="2.6" stroke-linecap="round" stroke-linejoin="round"/>
<rect x="83" y="832" width="1517" height="17" fill="#474747"/>
<rect x="83" y="832" width="18" height="17" fill="#3e3e3e"/>
<path d="M89.8,840.5 L94.2,836.3 L94.2,844.7 Z" fill="#a3aaa3"/>
<rect x="101" y="833" width="1476" height="15" fill="#6a6a6a"/>
<rect x="1577" y="832" width="23" height="17" fill="#3e3e3e"/>
<path d="M1592.5,836.3 L1596.3,840.5 L1592.5,844.7 Z" fill="#ffffff"/>
<rect x="83" y="849" width="1517" height="51" fill="#1f2a36"/>
<rect x="409" y="861.5" width="360" height="33.3" fill="#44535f" rx="3"/>
<text transform="translate(417.80 882.60) scale(0.93 1)" font-size="14.3" fill="#dde2e6" text-anchor="start" stroke="#dde2e6" stroke-width="0.4">8:40 am - 12:00 pm</text>
<text transform="translate(541.90 882.80) scale(0.947 1)" font-size="14" fill="#c9d0d6" text-anchor="start">3 hrs and 20 mins (10 mins intervals)</text>
<rect x="790" y="872.1" width="29.2" height="13" fill="#98aab6" rx="6.5"/>
<circle cx="796" cy="878.6" r="9.9" fill="#eef4f8" stroke="#1c2630" stroke-width="0.6"/>
<text transform="translate(825.30 883.00) scale(0.886 1)" font-size="14" fill="#c6ced4" text-anchor="start">UTC</text>
<text transform="translate(874.50 883.00) scale(0.92 1)" font-size="14" fill="#c9d0d6" text-anchor="start">5M</text>
<text transform="translate(905.60 883.00) scale(0.92 1)" font-size="14" fill="#c9d0d6" text-anchor="start">10M</text>
<text transform="translate(944.80 883.00) scale(0.92 1)" font-size="14" fill="#c9d0d6" text-anchor="start">1H</text>
<text transform="translate(974.20 883.00) scale(0.92 1)" font-size="14" fill="#c9d0d6" text-anchor="start">6H</text>
<text transform="translate(1003.00 883.00) scale(0.92 1)" font-size="14" fill="#c9d0d6" text-anchor="start">12H</text>
<text transform="translate(1040.80 883.00) scale(0.92 1)" font-size="14" fill="#c9d0d6" text-anchor="start">1D</text>
<text transform="translate(1069.80 883.00) scale(0.92 1)" font-size="14" fill="#c9d0d6" text-anchor="start">2W</text>
<text transform="translate(1120.20 883.00) scale(0.947 1)" font-size="14" fill="#c9d0d6" text-anchor="start">Zoom Out</text>
<rect x="1212.7" y="871.8" width="2.5" height="12.8" fill="#d8dee3"/>
<path d="M1216.8,878.2 L1225.7,871.8 L1225.7,884.6 Z" fill="#d8dee3"/>
<circle cx="1248.3" cy="878.4" r="10.6" fill="#d8dee3"/>
<path d="M1246.4,874.4 L1252.4,878.4 L1246.4,882.6 Z" fill="#1f2a36"/>
<path d="M1271.1,871.8 L1279.9,878.2 L1271.1,884.6 Z" fill="#465462"/>
<rect x="1281.6" y="871.8" width="2.4" height="12.8" fill="#465462"/>
<rect x="1309.2" y="861.3" width="83.5" height="33.6" fill="#2662cc" rx="16.8"/>
<text transform="translate(1350.80 883.00) scale(0.95 1)" font-size="14" fill="#e8eef8" text-anchor="middle">Paused</text>
<rect x="0" y="0" width="83" height="900" fill="#283645"/>
<rect x="83" y="146" width="2" height="686" fill="#232f3b"/>
<path d="M23.8,20.8 L40.4,45.4 Q41.8,47.6 44.2,47.6" stroke="#4ab6d6" fill="none" stroke-width="2.1" stroke-linecap="round" stroke-linejoin="round"/>
<path d="M35.2,27.5 L39,34.2 L43.2,32" stroke="#4ab6d6" fill="none" stroke-width="2.1" stroke-linecap="round" stroke-linejoin="round"/>
<path d="M47.4,32.8 Q54,41 53.2,49 Q52,56.8 42.8,57.4 Q37,57.5 31.6,52 L27.2,43.4 L30.3,40.8" stroke="#4ab6d6" fill="none" stroke-width="2.1" stroke-linecap="round" stroke-linejoin="round"/>
<path d="M32.8,43.6 L35.2,48.8 Q38.5,52.2 46.2,52.2" stroke="#4ab6d6" fill="none" stroke-width="2.1" stroke-linecap="round" stroke-linejoin="round"/>
<path d="M66.5,37.6 L71.3,42.2 L66.5,46.8" stroke="#3b8eae" fill="none" stroke-width="1.5"/>
<text transform="translate(41.50 80.20) scale(1.0 1)" font-size="12.2" fill="#4ab6d6" font-weight="bold" text-anchor="middle" letter-spacing="0.4">MONITOR</text>
<path d="M27.8,121 L40.5,112.8 L55.2,120 L42.8,128.3 Z" stroke="#a9b1b8" fill="none" stroke-width="1.4" stroke-linejoin="round"/>
<path d="M31.2,125.8 L27.8,128.3 L42.8,136 L55.2,127.8 L52,125.8" stroke="#a9b1b8" fill="none" stroke-width="1.4" stroke-linejoin="round"/>
<path d="M41.4,117.2 L46.4,120.4 L42,123.6 L37.2,120.4 Z" fill="#3d93ad" stroke="#3d93ad" stroke-width="0.8" stroke-linejoin="round"/>
<text transform="translate(41.50 158.40) scale(0.98 1)" font-size="12" fill="#8f99a2" text-anchor="middle">Overview</text>
<rect x="0" y="178.7" width="3.5" height="55.3" fill="#4ab6d6"/>
<rect x="29.8" y="184.2" width="23.6" height="23.6" fill="none" rx="3" stroke="#d6dce1" stroke-width="1.7"/>
<rect x="34.6" y="193.5" width="2.8" height="9.5" fill="#4ab6d6" rx="1.2"/>
<rect x="40.2" y="190" width="2.8" height="13" fill="#4ab6d6" rx="1.2"/>
<rect x="45.8" y="197.5" width="2.8" height="5.5" fill="#4ab6d6" rx="1.2"/>
<text transform="translate(41.50 229.30) scale(1.0 1)" font-size="12" fill="#e4e8ec" text-anchor="middle">Dashboards</text>
<circle cx="42" cy="266.8" r="13.4" fill="none" stroke="#a9b1b8" stroke-width="1.4"/>
<rect x="41.2" y="256.0" width="1.6" height="1.6" fill="#a9b1b8"/>
<rect x="41.2" y="276.0" width="1.6" height="1.6" fill="#a9b1b8"/>
<rect x="31.2" y="266.0" width="1.6" height="1.6" fill="#a9b1b8"/>
<rect x="51.2" y="266.0" width="1.6" height="1.6" fill="#a9b1b8"/>
<path d="M35.8,272.8 L39.4,265.4 L48,261 L44.6,268.6 Z" fill="#3d93ad"/>
<path d="M39.6,268.6 L42,266.4 L41.2,269.6 Z" fill="#283645"/>
<text transform="translate(41.50 300.00) scale(0.98 1)" font-size="12" fill="#8f99a2" text-anchor="middle">Explore</text>
<path d="M30.6,344.2 Q33.4,342.6 33.4,338 L33.4,333.6 Q33.6,325 41.2,324.8 Q48.8,325 49,333.6 L49,338 Q49,342.6 52.2,344.2" stroke="#a9b1b8" fill="none" stroke-width="1.4" stroke-linejoin="round"/>
<rect x="30.3" y="343.9" width="22.3" height="4.2" fill="none" rx="2" stroke="#a9b1b8" stroke-width="1.3"/>
<path d="M38.4,348.3 Q38.6,351.6 41.2,351.6 Q43.8,351.6 44,348.3" stroke="#a9b1b8" fill="none" stroke-width="1.4" stroke-linejoin="round"/>
<path d="M41.2,323 L41.2,324.8" stroke="#a9b1b8" fill="none" stroke-width="1.4" stroke-linejoin="round"/>
<path d="M29.2,335.4 Q29.6,330 32.6,326.4" stroke="#3d93ad" fill="none" stroke-width="2.3" stroke-linecap="round"/>
<path d="M53.4,335.4 Q53,330 50,326.4" stroke="#3d93ad" fill="none" stroke-width="2.3" stroke-linecap="round"/>
<text transform="translate(41.50 371.00) scale(0.98 1)" font-size="12" fill="#8f99a2" text-anchor="middle">Alerts</text>
<path d="M34.8,397 L34.8,396.6 Q34.8,395.8 33.8,395.8 L29.8,395.8 Q28.5,395.8 28.5,397 L28.5,411.3 Q28.5,412.6 29.8,412.6 L32.5,412.6" stroke="#a9b1b8" fill="none" stroke-width="1.4" stroke-linejoin="round"/>
<path d="M34.4,395.8 L49.6,395.8 Q50.7,395.8 50.7,397 L50.7,399.6" stroke="#a9b1b8" fill="none" stroke-width="1.4" stroke-linejoin="round"/>
<path d="M34.2,401.2 Q33,401.2 33,402.4 L33,416 Q33,417.2 34.2,417.2 L47.8,417.2 L50.5,420.8 L50.8,417.2 Q55,417.2 55,416 L55,402.4 Q55,401.2 53.8,401.2 Z" stroke="#a9b1b8" fill="none" stroke-width="1.4" stroke-linejoin="round"/>
<path d="M42.8,404.5 Q44.8,404.5 44.8,407 L43.6,411 L42,411 L40.8,407 Q40.8,404.5 42.8,404.5 Z" fill="#3f9cb8"/>
<rect x="42.1" y="412.2" width="1.4" height="1.6" fill="#3f9cb8"/>
<text transform="translate(41.50 441.00) scale(0.98 1)" font-size="12" fill="#8f99a2" text-anchor="middle">Events</text>
<path d="M28.8,474.5 L28.8,468.8 Q28.8,466.4 31.2,466.4 L37,466.4" stroke="#a9b1b8" fill="none" stroke-width="1.3"/>
<path d="M46,466.4 L51.8,466.4 Q54.2,466.4 54.2,468.8 L54.2,474.5" stroke="#a9b1b8" fill="none" stroke-width="1.3"/>
<path d="M54.2,483.5 L54.2,489.2 Q54.2,491.6 51.8,491.6 L46,491.6" stroke="#a9b1b8" fill="none" stroke-width="1.3"/>
<path d="M37,491.6 L31.2,491.6 Q28.8,491.6 28.8,489.2 L28.8,483.5" stroke="#a9b1b8" fill="none" stroke-width="1.3"/>
<circle cx="41.5" cy="479" r="5.2" fill="none" stroke="#3f9cb8" stroke-width="2.3"/>
<text transform="translate(41.50 512.00) scale(1.02 1)" font-size="12" fill="#8f99a2" text-anchor="middle">Captures</text>
<path d="M55.6,680.8 Q51,692 50.8,695.6 L51.3,700 L44.4,706.1 L42.8,702.8 L38.3,703.3 L32.8,698.3 L33.3,693.9 L30,691.7 L35,686.1 L40.3,686.1 L46.4,683.3 Q50,681.3 55.6,680.8 Z" stroke="#a9b1b8" fill="none" stroke-width="1.3" stroke-linejoin="round"/>
<circle cx="45.8" cy="690.3" r="3.2" fill="none" stroke="#3f9cb8" stroke-width="1.6"/>
<path d="M27.6,703.4 L30.5,701" stroke="#3f9cb8" fill="none" stroke-width="1.7" stroke-linecap="round"/>
<path d="M28.6,707.6 L32.8,703.8" stroke="#3f9cb8" fill="none" stroke-width="1.7" stroke-linecap="round"/>
<path d="M32,708.8 L34.6,706.4" stroke="#3f9cb8" fill="none" stroke-width="1.7" stroke-linecap="round"/>
<text transform="translate(41.60 734.10) scale(0.965 1)" font-size="13.6" fill="#8f99a2" text-anchor="middle">Get Started</text>
<circle cx="41.75" cy="780.7" r="16.8" fill="#7b9a9c"/>
<text transform="translate(41.60 785.40) scale(0.97 1)" font-size="13.5" fill="#44545e" text-anchor="middle">AN</text>
<circle cx="53.6" cy="769.2" r="4.6" fill="#e06a62" stroke="#2a3a48" stroke-width="0.8"/>
<circle cx="41.75" cy="827.3" r="11.2" fill="#78858f"/>
<text transform="translate(41.75 833.40) scale(0.95 1)" font-size="16.5" fill="#25313c" text-anchor="middle" stroke="#25313c" stroke-width="0.6">?</text>
<circle cx="41.75" cy="874" r="16.8" fill="#4cb5d2"/>
<path d="M36,865.7 L47,865.7 Q49,865.7 49,867.7 L49,882.5 L45.5,880.3 L36,880.3 Q34,880.3 34,878.3 L34,867.7 Q34,865.7 36,865.7 Z" fill="#f4f8fa"/>
<path d="M37.6,876 Q41.5,878.4 45.4,876" stroke="#4cb5d2" fill="none" stroke-width="1.4" stroke-linecap="round"/>
</svg>
</body></html>
